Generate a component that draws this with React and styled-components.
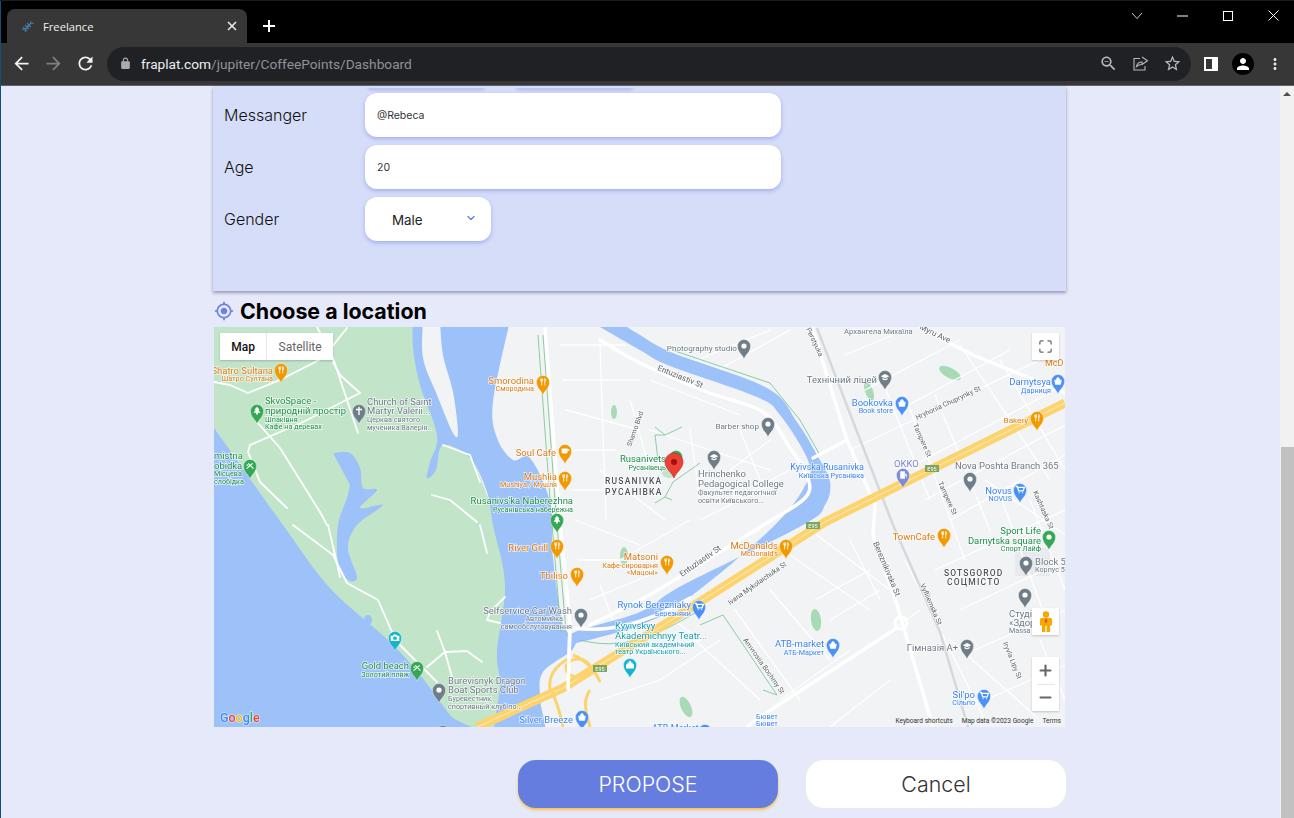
import React from "react";
import styled, { createGlobalStyle } from "styled-components";
import { ChevronDown, Maximize, Plus, Minus } from "lucide-react";

const GlobalStyle = createGlobalStyle`
  html, body {
    margin: 0;
    height: 100%;
    overflow: hidden;
    background: #e6e9fa;
    font-family: Inter, "Liberation Sans", sans-serif;
  }
`;

const Screen = styled.div`
  position: relative;
  display: flex;
  flex-direction: column;
  width: 1294px;
  height: 818px;
  overflow: hidden;
  &::before {
    content: "";
    position: absolute;
    top: 1px;
    bottom: 0;
    left: 0;
    width: 1px;
    background: #12507a;
  }
`;

/* browser chrome */
const TabStrip = styled.div`
  display: flex;
  align-items: flex-end;
  height: 43px;
  flex: none;
  padding-left: 7px;
  background: #000;
  border-top: 1px solid #1c1c1c;
  box-sizing: border-box;
`;

const Tab = styled.div`
  display: flex;
  align-items: center;
  width: 240px;
  height: 34px;
  padding: 0 10px 0 13px;
  box-sizing: border-box;
  border-radius: 8px 8px 0 0;
  background: #373737;
  color: #f1f1f1;
  font: 11.2px "Open Sans", "Liberation Sans", sans-serif;
`;

const TabTitle = styled.span`
  flex: 1;
  margin-left: 7px;
`;

const NewTab = styled.div`
  display: flex;
  align-items: center;
  justify-content: center;
  width: 44px;
  height: 34px;
`;

const WindowButtons = styled.div`
  display: flex;
  align-self: flex-start;
  margin-left: auto;
  margin-right: -2px;
`;

const WindowButton = styled.div`
  display: flex;
  align-items: center;
  justify-content: center;
  width: 45.5px;
  height: 29px;
`;

const Toolbar = styled.div`
  display: flex;
  align-items: center;
  height: 43px;
  flex: none;
  padding: 0 3px 1px 5px;
  box-sizing: border-box;
  background: #373737;
  border-bottom: 1px solid #5f6368;
`;

const NavIcon = styled.div`
  display: flex;
  align-items: center;
  justify-content: center;
  width: 32px;
  height: 32px;
`;

const Omnibox = styled.div`
  display: flex;
  align-items: center;
  flex: 1;
  height: 34px;
  margin: 0 4px 0 6px;
  padding: 0 3px 0 12px;
  border-radius: 17px;
  background: #202124;
`;

const Url = styled.div`
  flex: 1;
  margin-left: 9px;
  font: 13.7px Roboto, "Liberation Sans", sans-serif;
  color: #8f9399;
  & b {
    font-weight: 400;
    color: #eceff1;
  }
`;

const Avatar = styled.div`
  display: flex;
  align-items: center;
  justify-content: center;
  width: 22px;
  height: 22px;
  border-radius: 50%;
  background: #000;
`;

/* page */
const Viewport = styled.div`
  display: flex;
  flex: 1;
  min-height: 0;
`;

const Page = styled.main`
  flex: 1;
  min-width: 0;
  padding-right: 1px;
`;

const Column = styled.div`
  width: 853px;
  margin: 0 auto;
`;

const Panel = styled.section`
  display: flex;
  flex-direction: column;
  gap: 8px;
  padding-bottom: 50px;
  background: #d6ddf8;
  box-shadow: 0 2px 3px rgba(60, 64, 90, 0.45);
`;

const StubRow = styled.div`
  display: flex;
  gap: 31px;
  height: 2px;
  margin-bottom: -3px;
  padding-left: 155px;
`;

const Stub = styled.div`
  width: ${(p) => p.$w}px;
  height: 2px;
  background: #d6ddf8;
  border-radius: 0 0 10px 10px;
  box-shadow: 0 2px 3px #a3aef0;
`;

const Row = styled.div`
  display: flex;
  align-items: center;
  padding-left: 11px;
`;

const Label = styled.label`
  width: 141px;
  font-size: 16px;
  font-weight: 300;
  color: #111;
`;

const Input = styled.div`
  display: flex;
  align-items: center;
  width: 416px;
  height: 44px;
  padding-left: 12px;
  box-sizing: border-box;
  border-radius: 12px;
  background: #fff;
  box-shadow: 0 2px 4px #a3aef0;
  font: 10.5px Inter, sans-serif;
  color: #333;
`;

const Select = styled.div`
  display: flex;
  align-items: center;
  justify-content: space-between;
  width: 126px;
  height: 44px;
  padding: 2px 14px 0 27px;
  box-sizing: border-box;
  border-radius: 12px;
  background: #fff;
  box-shadow: 0 2px 4px #a3aef0;
  font-size: 13.4px;
  color: #222;
  & svg {
    margin-top: -5px;
  }
`;

const SectionTitle = styled.h2`
  display: flex;
  align-items: center;
  gap: 6px;
  height: 36px;
  margin: 0;
  padding: 4px 0 0 1px;
  box-sizing: border-box;
  font-size: 21.4px;
  font-weight: 700;
  color: #000;
`;

const MapFrame = styled.div`
  position: relative;
  width: 851px;
  height: 400px;
  margin-left: 1px;
  overflow: hidden;
  background: #f1f3f4;
`;

const MapSvg = styled.svg`
  display: block;
  filter: blur(0.3px);
`;

const MapTypes = styled.div`
  position: absolute;
  top: 6px;
  left: 6px;
  display: flex;
  height: 27px;
  background: #fff;
  box-shadow: 0 1px 2px rgba(0, 0, 0, 0.2);
  font: 12px Roboto, sans-serif;
`;

const MapType = styled.div`
  display: flex;
  align-items: center;
  padding: 0 11.3px;
  color: ${(p) => (p.$active ? "#111" : "#666")};
  font-weight: ${(p) => (p.$active ? 500 : 400)};
  & + & {
    border-left: 1px solid #e6e6e6;
  }
`;

const MapButton = styled.div`
  position: absolute;
  right: 6px;
  top: ${(p) => p.$top}px;
  display: flex;
  align-items: center;
  justify-content: center;
  width: 27px;
  height: 27px;
  background: #fff;
  box-shadow: 0 1px 2px rgba(0, 0, 0, 0.2);
  color: #666;
`;

const ZoomBox = styled.div`
  position: absolute;
  right: 6px;
  top: 330px;
  display: flex;
  flex-direction: column;
  align-items: center;
  justify-content: center;
  gap: 4.5px;
  width: 27px;
  height: 54px;
  background: #fff;
  box-shadow: 0 1px 2px rgba(0, 0, 0, 0.2);
  color: #666;
`;

const ZoomRule = styled.div`
  width: 18px;
  height: 1px;
  background: #e6e6e6;
`;

const Attribution = styled.div`
  position: absolute;
  right: 4px;
  bottom: 2px;
  display: flex;
  gap: 9px;
  font: 6.6px Roboto, sans-serif;
  color: #333;
  background: rgba(241, 243, 244, 0.7);
`;

const Actions = styled.div`
  display: flex;
  justify-content: flex-end;
  gap: 28px;
  margin-top: 33px;
`;

const Button = styled.button`
  width: 260px;
  height: 48px;
  border: 0;
  border-radius: 18px;
  font: 300 21.4px Inter, sans-serif;
  background: ${(p) => (p.$primary ? "#667de0" : "#fff")};
  color: ${(p) => (p.$primary ? "#fff" : "#333")};
  box-shadow: ${(p) => (p.$primary ? "0 2px 3px #fbbf4f" : "none")};
`;

const Scrollbar = styled.div`
  display: flex;
  flex-direction: column;
  align-items: center;
  width: 14px;
  background: #f1f1f1;
`;

const ScrollArrow = styled.div`
  width: 0;
  height: 0;
  margin-top: 6px;
  border: 4px solid transparent;
  border-top: 0;
  border-bottom: 4px solid #505050;
`;

const ScrollThumb = styled.div`
  align-self: flex-end;
  width: 13px;
  margin-top: auto;
  height: 371px;
  background: #c1c1c1;
`;

const Mat = ({ d, size = 20, color = "#fff" }) => (
  <svg width={size} height={size} viewBox="0 0 24 24" fill={color}>
    <path d={d} />
  </svg>
);

const ICONS = {
  back: "M20 11H7.83l5.59-5.59L12 4l-8 8 8 8 1.41-1.41L7.83 13H20v-2z",
  forward: "M4 11h12.17l-5.59-5.59L12 4l8 8-8 8-1.41-1.41L16.17 13H4v-2z",
  reload:
    "M17.65 6.35C16.2 4.9 14.21 4 12 4c-4.42 0-7.99 3.58-7.99 8s3.57 8 7.99 8c3.73 0 6.84-2.55 7.73-6h-2.08c-.82 2.33-3.04 4-5.65 4-3.31 0-6-2.69-6-6s2.69-6 6-6c1.66 0 3.14.69 4.22 1.78L13 11h7V4l-2.35 2.35z",
  lock: "M18 8h-1V6c0-2.76-2.24-5-5-5S7 3.24 7 6v2H6c-1.1 0-2 .9-2 2v10c0 1.1.9 2 2 2h12c1.1 0 2-.9 2-2V10c0-1.1-.9-2-2-2zM9 6c0-1.66 1.34-3 3-3s3 1.34 3 3v2H9V6z",
  star: "M22 9.24l-7.19-.62L12 2 9.19 8.63 2 9.24l5.46 4.73L5.82 21 12 17.27 18.18 21l-1.63-7.03L22 9.24zM12 15.4l-3.76 2.27 1-4.28-3.32-2.88 4.38-.38L12 6.1l1.71 4.04 4.38.38-3.32 2.88 1 4.28L12 15.4z",
  zoomOut:
    "M15.5 14h-.79l-.28-.27C15.41 12.59 16 11.11 16 9.5 16 5.91 13.09 3 9.5 3S3 5.91 3 9.5 5.91 16 9.5 16c1.61 0 3.09-.59 4.23-1.57l.27.28v.79l5 4.99L20.49 19l-4.99-5zm-6 0C7.01 14 5 11.99 5 9.5S7.01 5 9.5 5 14 7.01 14 9.5 11.99 14 9.5 14zM7 9h5v1H7z",
  person:
    "M12 12c2.21 0 4-1.79 4-4s-1.79-4-4-4-4 1.79-4 4 1.79 4 4 4zm0 2c-2.67 0-8 1.34-8 4v2h16v-2c0-2.66-5.33-4-8-4z",
  kebab:
    "M12 8c1.1 0 2-.9 2-2s-.9-2-2-2-2 .9-2 2 .9 2 2 2zm0 2c-1.1 0-2 .9-2 2s.9 2 2 2 2-.9 2-2-.9-2-2-2zm0 6c-1.1 0-2 .9-2 2s.9 2 2 2 2-.9 2-2-.9-2-2-2z",
  target:
    "M12 8c-2.21 0-4 1.79-4 4s1.79 4 4 4 4-1.79 4-4-1.79-4-4-4zm8.94 3c-.46-4.17-3.77-7.48-7.94-7.94V1h-2v2.06C6.83 3.52 3.52 6.83 3.06 11H1v2h2.06c.46 4.17 3.77 7.48 7.94 7.94V23h2v-2.06c4.17-.46 7.48-3.77 7.94-7.94H23v-2h-2.06zM12 19c-3.87 0-7-3.13-7-7s3.13-7 7-7 7 3.13 7 7-3.13 7-7 7z",
};

const Favicon = () => (
  <svg width="16" height="16" viewBox="0 0 16 16" fill="none" stroke="#3f7cac" strokeWidth="1.1">
    <path d="M2 11c4 1 8-2 9-8M5 14c1-6 5-9 9-9M5 7l4 4M7 5l4 4M3 9l4 4" />
  </svg>
);

// catmull-rom through the points, so shores and the canal don't look cut with a ruler
const smooth = (pts, close = false) => {
  let d = `M${pts[0][0]} ${pts[0][1]}`;
  for (let i = 0; i < pts.length - 1; i++) {
    const p0 = pts[i - 1] || pts[i];
    const p1 = pts[i];
    const p2 = pts[i + 1];
    const p3 = pts[i + 2] || p2;
    const c1x = p1[0] + (p2[0] - p0[0]) / 6;
    const c1y = p1[1] + (p2[1] - p0[1]) / 6;
    const c2x = p2[0] - (p3[0] - p1[0]) / 6;
    const c2y = p2[1] - (p3[1] - p1[1]) / 6;
    d += `C${c1x.toFixed(1)} ${c1y.toFixed(1)} ${c2x.toFixed(1)} ${c2y.toFixed(1)} ${p2[0]} ${p2[1]}`;
  }
  return close ? d + "Z" : d;
};

/* map data, in the coordinates of the screenshot */
const PARK = "M214 320H440L470 450 500 530 508 585 505 740H214Z";
const WEST_WATER = smooth(
  [[200, 410], [214, 428], [283, 525], [330, 588], [388, 640], [420, 675], [450, 715], [470, 740], [200, 740]],
  true
);
const EAST_WATER = smooth(
  [
    [413, 320], [413, 348], [420, 385], [437, 435], [430, 462], [427, 478], [436, 470], [443, 445], [470, 458],
    [487, 492], [493, 525], [505, 585], [497, 652], [500, 685], [497, 740], [543, 740], [540, 698], [543, 672],
    [572, 650], [575, 635], [563, 625], [553, 558], [550, 502], [530, 458], [513, 460], [497, 438], [493, 402],
    [510, 320],
  ],
  true
);
const ISLAND = smooth(
  [[423, 320], [423, 358], [437, 395], [453, 433], [458, 432], [453, 392], [443, 355], [440, 320]],
  true
);
const LAKE = smooth(
  [
    [333, 453], [350, 453], [360, 468], [363, 488], [377, 490], [360, 508], [383, 505], [357, 525], [348, 548],
    [357, 577], [348, 580], [338, 562], [338, 525], [347, 498], [350, 485],
  ],
  true
);
const CANAL = smooth(
  [
    [627, 327], [640, 335], [673, 353], [767, 388], [797, 422], [817, 455], [830, 482], [825, 505], [803, 525],
    [683, 585], [640, 612], [575, 632], [565, 645], [640, 625], [690, 597], [773, 527], [807, 482], [807, 458],
    [780, 415], [757, 397], [670, 366], [640, 350], [600, 327],
  ],
  true
);
const ENTUZIASTIV = smooth([
  [600, 340], [640, 363], [707, 392], [763, 412], [790, 448], [807, 475], [805, 498], [760, 527], [683, 575],
  [640, 600], [590, 625],
]);

const MAJOR_ROADS = [
  "M545 327L560 522 570 625 568 690",
  "M812 327L847 440 875 505 873 535 897 605 933 727",
  "M897 628L763 715 747 727",
  "M920 328L973 355 1040 382 1065 393",
  "M813 458L847 440",
  "M575 628C600 632 640 628 690 598",
];

const MINOR_ROADS = [
  "M560 345H625M563 380H640M566 410L640 430M570 450H615M572 490H630M575 520L640 545M578 560H660M600 345L606 520",
  "M630 400L650 470M600 470L665 520M620 560L690 520M650 380L740 415M690 430L700 500M740 430L760 480M650 430L770 470",
  "M685 365L770 330M700 380L790 330M730 470L770 440M735 500L790 470M700 520L780 480",
  "M845 355L905 330M865 390L960 340M890 415L1010 350M905 470L1055 390M925 500L1065 425M850 450L1040 360",
  "M880 375L930 500M905 395L965 560M935 395L990 530M960 345L1050 480M1000 360L1065 470",
  "M985 480L1065 535M950 520L1065 455M935 570L1065 510M960 610L1065 560M975 650L1065 610",
  "M1000 495L1050 630M1030 500L1065 590M905 560L985 720M950 640L1040 720M985 700L1065 665M1040 640L1065 700",
  "M790 555L870 610M810 530L890 590M770 590L830 660M735 610L800 700M695 640L760 700M640 650L700 640M660 680L720 640M600 700L660 680",
  "M850 540L880 600M815 600L870 570M830 620L880 590M850 660L920 610M780 700L850 650M830 727L890 680",
  "M590 600L650 575M600 585L620 640M660 610L700 640M700 560L760 530",
];

const PARK_PATHS = [
  "M214 382L230 385 248 393 280 380 323 358 347 328",
  "M317 327L333 358 358 433",
  "M333 362L340 375 360 393 303 422 250 445 248 452 260 482 287 508",
  "M257 422L280 448 320 512 327 525",
  "M293 525L333 555 347 583 378 600 392 632 400 645 437 682",
  "M328 525L338 568 340 577",
  "M437 631L445 652 452 677",
  "M427 667L445 652 467 651 482 662",
  "M505 597L490 612 487 620 500 623",
  "M480 525L487 553",
  "M432 495L450 500 477 522",
  "M443 445L470 455 480 482",
];

const GREEN_PATHS = [
  "M538 335L550 500 561 632",
  "M543 335L555 500 566 632",
  "M655 427L665 435 682 427M665 435L655 435 658 460",
  "M700 463L673 482 665 497 655 503M665 497L672 500",
  "M672 350L770 383 800 420 820 455",
  "M700 625L723 615 777 695 763 690",
  "M580 640C620 650 650 640 700 610",
];

// text, x, y, colour, size, anchor
const LABELS = [
  ["Shatro Sultana", 273, 374, "o", 10.5, "end"],
  ["Шатро Султана", 273, 381, "o", 8, "end"],
  ["SkvoSpace -", 265, 404, "g", 10.5],
  ["природній простір", 265, 414, "g", 10.5],
  ["Шпаківня -", 265, 422, "g", 8],
  ["Кафе на деревах", 265, 429, "g", 8],
  ["Church of Saint", 367, 405, "s", 10.5],
  ["Martyr Valerii...", 367, 414, "s", 10.5],
  ["Церква святого", 367, 422, "s", 8],
  ["мученика Валерія...", 367, 430, "s", 8],
  ["mistna", 214, 459, "g", 10.5],
  ["obidka", 214, 469, "g", 10.5],
  ["Місцева", 214, 476, "g", 8],
  ["слобідка", 214, 484, "g", 8],
  ["Smorodina", 534, 384, "o", 10.5, "end"],
  ["Смородина", 534, 391, "o", 8, "end"],
  ["Soul Cafe", 556, 456, "o", 10.5, "end"],
  ["Mushlia", 557, 480, "o", 10.5, "end"],
  ["Mushlya / Мушля", 557, 487, "o", 8, "end"],
  ["Rusanivs'ka Naberezhna", 573, 504, "g", 10.5, "end"],
  ["Русанівська набережна", 573, 512, "g", 8, "end"],
  ["River Grill", 548, 551, "o", 10.5, "end"],
  ["Tbiliso", 568, 579, "o", 10.5, "end"],
  ["Selfservice Car Wash", 572, 614, "s", 10.5, "end"],
  ["Автомийка", 563, 621, "s", 8, "end"],
  ["самообслуговування", 572, 629, "s", 8, "end"],
  ["Gold beach", 409, 669, "g", 10.5, "end"],
  ["Золотий пляж", 409, 677, "g", 8, "end"],
  ["Burevisnyk Dragon", 448, 684, "s", 10.5],
  ["Boat Sports Club", 448, 693, "s", 10.5],
  ["Буревестник,", 448, 701, "s", 8],
  ["спортивный клуб по...", 448, 709, "s", 8],
  ["Silver Breeze", 573, 723, "b", 10.5, "end"],
  ["Rusanivets", 666, 462, "g", 10.5, "end"],
  ["Русанівець", 666, 470, "g", 8, "end"],
  ["Photography studio", 737, 351, "s", 9, "end"],
  ["Barber shop", 759, 429, "s", 9, "end"],
  ["Hrinchenko", 698, 477, "s", 10.5],
  ["Pedagogical College", 698, 487, "s", 10.5],
  ["Факультет педагогічної", 698, 495, "s", 8],
  ["освіти Київського...", 698, 503, "s", 8],
  ["Kyivska Rusanivka", 864, 470, "b", 10, "end"],
  ["Київська Русанівка", 864, 478, "b", 8, "end"],
  ["Технічний ліцей", 877, 383, "s", 10.5, "end"],
  ["Bookovka", 893, 406, "b", 10.5, "end"],
  ["Book store", 893, 413, "b", 8, "end"],
  ["Архангела Михаїла", 844, 334, "s", 8.5],
  ["Darnytsya", 1051, 385, "b", 10.5, "end"],
  ["Дарниця", 1051, 393, "b", 8, "end"],
  ["Bakery", 1028, 423, "o", 9, "end"],
  ["OKKO", 894, 467, "p", 10.5],
  ["Nova Poshta Branch 365", 955, 469, "s", 10.5],
  ["Novus", 1012, 494, "b", 10.5, "end"],
  ["NOVUS", 1012, 501, "b", 8, "end"],
  ["TownCafe", 935, 540, "o", 10.5, "end"],
  ["Sport Life", 1041, 534, "g", 10.5, "end"],
  ["Darnytska square", 1041, 544, "g", 10.5, "end"],
  ["Спорт Лайф", 1041, 551, "g", 8, "end"],
  ["Block 5", 1035, 565, "s", 10.5],
  ["Корпус 5", 1035, 572, "s", 8],
  ["Студі", 1009, 617, "s", 10.5],
  ["«Здор", 1009, 626, "s", 10.5],
  ["Massa", 1009, 633, "s", 8],
  ["Гімназія A+", 958, 651, "s", 10.5, "end"],
  ["Sil'po", 975, 698, "b", 10.5, "end"],
  ["Сільпо", 975, 705, "b", 8, "end"],
  ["ATB-market", 824, 647, "b", 10.5, "end"],
  ["АТБ-Маркет", 824, 655, "b", 8, "end"],
  ["Rynok Berezniaky", 691, 608, "b", 10.5, "end"],
  ["Березняки", 691, 616, "b", 8, "end"],
  ["Kyyivskyy", 615, 629, "t", 10.5],
  ["Akademichnyy Teatr...", 615, 639, "t", 10.5],
  ["Київський академічний", 615, 647, "t", 8],
  ["театр Українського...", 615, 654, "t", 8],
  ["Matsoni", 658, 560, "o", 10.5, "end"],
  ["Кафе-сироварня", 658, 568, "o", 8, "end"],
  ["«Мацоні»", 658, 575, "o", 8, "end"],
  ["McDonalds", 778, 549, "o", 10.5, "end"],
  ["McDonald's", 778, 556, "o", 8, "end"],
  ["McD", 1045, 366, "o", 10],
  ["Бювет", 756, 719, "b", 8],
  ["Бювет", 756, 726, "b", 8],
  ["ATB-Market", 652, 731, "b", 10],
];

const STREETS = [
  ["RUSANIVKA", 605, 484, 8.5, 1.2],
  ["РУСАНІВКА", 605, 495, 8.5, 1.2],
  ["SOTSGOROD", 944, 576, 8.5, 1.1],
  ["СОЦМІСТО", 947, 585, 8.5, 1.2],
];

const ROAD_NAMES = [
  ["Entuziastiv St", 657, 370, 22, 8],
  ["Entuziastiv St", 682, 577, -35, 8],
  ["Shamo Blvd", 631, 447, -70, 7],
  ["Myru Ave", 919, 329, 25, 8],
  ["Hryhoriia Chuprynky St", 917, 420, -25, 7],
  ["Tampere St", 913, 425, 66, 7],
  ["Tampere St", 938, 483, 65, 7],
  ["Kashtaska St", 1033, 492, 66, 7],
  ["Bereznikivska St", 873, 543, 67, 8],
  ["Vyfliiemska St", 920, 585, 66, 7],
  ["Ivana Mykolaichuka St", 730, 605, -35, 7],
  ["Amvrosiia Bochmy St", 743, 640, 55, 7],
  ["Iryvla Lipy St", 1003, 643, 68, 7],
  ["Perstyuka", 806, 329, 65, 7],
];

const COLORS = {
  o: "#e07b12",
  g: "#1e8e4a",
  s: "#6e7a85",
  b: "#3b82f1",
  t: "#129eaf",
  p: "#7a85cc",
};

const PINS = [
  [281, 370, "o", "fork"],
  [543, 382, "o", "fork"],
  [565, 451, "o", "cup"],
  [565, 478, "o", "fork"],
  [1037, 418, "o", "fork"],
  [557, 546, "o", "fork"],
  [577, 574, "o", "fork"],
  [667, 562, "o", "fork"],
  [786, 546, "o", "fork"],
  [944, 535, "o", "fork"],
  [257, 411, "g", "tree"],
  [557, 520, "g", "tree"],
  [250, 466, "g", "ball"],
  [417, 668, "g", "ball"],
  [1049, 537, "g", "dot"],
  [676, 457, "g", "dot"],
  [359, 411, "s", "cross"],
  [744, 346, "s", "dot"],
  [768, 424, "s", "dot"],
  [714, 457, "s", "cap"],
  [885, 377, "s", "cap"],
  [970, 479, "s", "dot"],
  [1026, 563, "s", "dot"],
  [1025, 595, "s", "dot"],
  [967, 646, "s", "cap"],
  [581, 615, "s", "dot"],
  [439, 690, "s", "dot"],
  [443, 732, "s", "dot"],
  [1058, 381, "b", "bag"],
  [902, 403, "b", "bag"],
  [1020, 490, "b", "cart"],
  [699, 607, "b", "cart"],
  [833, 645, "b", "bag"],
  [984, 696, "b", "cart"],
  [582, 717, "b", "bag"],
  [705, 731, "b", "bag"],
  [395, 638, "t", "camera"],
  [630, 665, "t", "bank"],
  [903, 475, "p", "fuel"],
];

const PIN_COLORS = {
  o: "#f29900",
  g: "#34a853",
  s: "#6f7d88",
  b: "#4a90f5",
  t: "#12b5cb",
  p: "#7b8bd6",
};

const SHIELDS = [
  [593, 665],
  [925, 465],
  [806, 522],
];

const Glyph = ({ type }) => {
  switch (type) {
    case "fork":
      return <path d="M-2.5-4V-1M-1.5-4V4M-.5-4V-1M-2.5-1H-.5M2-4V4M2-4C3.4-3 3.4-.5 2-.3" stroke="#fff" strokeWidth="1" fill="none" />;
    case "cup":
      return <path d="M-4-3H3V1C3 2.5 2 3 1 3H-2C-3 3-4 2.5-4 1ZM3-2H5V0H3" fill="#fff" />;
    case "tree":
      return <path d="M0-5L3-1.5H1.5L4 2H1V4H-1V2H-4L-1.5-1.5H-3Z" fill="#fff" />;
    case "ball":
      return <path d="M-4 3L3-3M-2-3L4 3M-4-1H-2" stroke="#fff" strokeWidth="1.4" fill="none" />;
    case "cross":
      return <path d="M-.8-5H.8V-2.5H3.5V-1H.8V4.5H-.8V-1H-3.5V-2.5H-.8Z" fill="#fff" />;
    case "cap":
      return <path d="M-5-1L0-3.5 5-1 0 1.5ZM-3 1V2.5C-1 4 1 4 3 2.5V1L0 2.5Z" fill="#fff" />;
    case "bag":
      return <path d="M-4-1H4L3 4H-3ZM-2-1C-2-5 2-5 2-1" fill="#fff" stroke="#fff" strokeWidth=".6" />;
    case "cart":
      return <path d="M-5-4H-3L-1.5 1H3.5L5-3H-2.5M-1.5 3H-.5M2.5 3H3.5" stroke="#fff" strokeWidth="1.5" fill="none" />;
    case "camera":
      return <path d="M-5-2.5H-2.5L-1.5-4H1.5L2.5-2.5H5V3.5H-5ZM0-1.5A1.8 1.8 0 1 0 0 2 1.8 1.8 0 1 0 0-1.5Z" fill="#fff" fillRule="evenodd" />;
    case "bank":
      return <path d="M-1-5H1V-3H3V-1H4.5V4H-4.5V-1H-3V-3H-1Z" fill="#fff" />;
    case "fuel":
      return <path d="M-3-4H2V4H-3ZM2-1H4V3" fill="#fff" stroke="#fff" strokeWidth=".5" />;
    default:
      return <circle r="3" fill="#fff" />;
  }
};

const Pin = ({ x, y, color, type }) => (
  <g transform={`translate(${x} ${y}) scale(.87)`}>
    <path
      d="M0 15C-1.5 10-7.5 7-7.5 0A7.5 7.5 0 0 1 7.5 0C7.5 7 1.5 10 0 15Z"
      fill={PIN_COLORS[color]}
      stroke="#fff"
      strokeOpacity=".7"
      strokeWidth=".6"
    />
    <Glyph type={type} />
  </g>
);

const MapDrawing = () => (
  <MapSvg width="851" height="400" viewBox="214 327 851 400">
    <rect x="214" y="327" width="851" height="400" fill="#f1f3f4" />
    <path d={PARK} fill="#c2e5ca" />
    <path d={EAST_WATER} fill="#9dc1f9" />
    <path d={ISLAND} fill="#f1f3f4" />
    <path d={LAKE} fill="#9dc1f9" />
    <ellipse cx="368" cy="620" rx="4" ry="5" fill="#9dc1f9" />
    <path d={WEST_WATER} fill="#9dc1f9" />

    <ellipse cx="950" cy="373" rx="12" ry="5" transform="rotate(28 950 373)" fill="#a8dab5" />
    <ellipse cx="869" cy="391" rx="4" ry="10" transform="rotate(-20 869 391)" fill="#a8dab5" />
    <ellipse cx="816" cy="620" rx="5" ry="11" transform="rotate(-8 816 620)" fill="#a8dab5" />
    <ellipse cx="686" cy="707" rx="5" ry="11" transform="rotate(-25 686 707)" fill="#a8dab5" />
    <ellipse cx="614" cy="412" rx="3" ry="7" fill="#a8dab5" />
    <ellipse cx="624" cy="556" rx="4" ry="9" fill="#a8dab5" />
    <ellipse cx="669" cy="473" rx="7" ry="5" fill="#c2e5ca" />
    <rect x="1015" y="548" width="35" height="28" fill="#e8eaed" />

    <g fill="none" stroke="#fff" strokeLinecap="round" strokeLinejoin="round">
      {MINOR_ROADS.map((d) => (
        <path key={d} d={d} strokeWidth="1.3" />
      ))}
      {PARK_PATHS.map((d) => (
        <path key={d} d={d} strokeWidth="1.8" />
      ))}
    </g>

    <path d={CANAL} fill="#9dc1f9" />

    <g fill="none" stroke="#7fc89a" strokeWidth=".9">
      {GREEN_PATHS.map((d) => (
        <path key={d} d={d} />
      ))}
    </g>

    <path d="M817 328L893 525 940 632 968 727" fill="none" stroke="#d5d8dc" strokeWidth="2.5" />
    <g fill="none" stroke="#fff" strokeLinecap="round" strokeLinejoin="round">
      <path d={ENTUZIASTIV} strokeWidth="3.5" />
      {MAJOR_ROADS.map((d) => (
        <path key={d} d={d} strokeWidth="3.5" />
      ))}
    </g>

    <g fill="none" stroke="#fdd36d" strokeLinejoin="round">
      <path d="M1065 403L825 522 640 640 563 688 477 727" strokeWidth="9" />
      <path d="M1065 403L825 522 640 640 563 688 477 727" stroke="#fff3cf" strokeWidth=".8" />
      <ellipse cx="578" cy="668" rx="12" ry="9" strokeWidth="3" />
      <path
        d="M550 690C548 675 556 665 570 658M573 655C585 660 595 670 600 682M563 727C560 710 555 700 552 690M590 727C585 710 583 700 590 690"
        strokeWidth="3"
      />
    </g>
    <path d="M570 625L568 690" stroke="#fff" strokeWidth="3.5" />
    <circle cx="901" cy="623" r="6" fill="none" stroke="#fff" strokeWidth="3" />

    {SHIELDS.map(([x, y]) => (
      <g key={x}>
        <rect x={x} y={y} width="14" height="7" fill="#7aa660" />
        <text x={x + 7} y={y + 5.5} fontFamily="Roboto, sans-serif" fontSize="5.5" textAnchor="middle" fill="#fff">
          E95
        </text>
      </g>
    ))}

    <g fontFamily="Roboto, sans-serif" paintOrder="stroke" stroke="#fff" strokeOpacity=".75" strokeWidth="1.5">
      {ROAD_NAMES.map(([text, x, y, angle, size]) => (
        <text key={text + x} x={x} y={y} transform={`rotate(${angle} ${x} ${y})`} fontSize={size} fill="#5f6368">
          {text}
        </text>
      ))}
      {STREETS.map(([text, x, y, size, spacing]) => (
        <text key={text} x={x} y={y} fontSize={size} letterSpacing={spacing} fontWeight="500" fill="#4f5459">
          {text}
        </text>
      ))}
      {LABELS.map(([text, x, y, color, size, anchor]) => (
        <text key={text + x + y} x={x} y={y} fontSize={size * 0.9} textAnchor={anchor || "start"} fill={COLORS[color]}>
          {text}
        </text>
      ))}
    </g>

    {PINS.map(([x, y, color, type]) => (
      <Pin key={`${x}-${y}`} x={x} y={y} color={color} type={type} />
    ))}

    <g transform="translate(674 463)">
      <path d="M0 15C-2 9-9 6-9 -1A9 9 0 0 1 9 -1C9 6 2 9 0 15Z" fill="#ea4335" stroke="#c5221f" strokeWidth=".6" />
      <circle cy="-1" r="3" fill="#a50e0e" />
    </g>

    <text x="220" y="722" fontFamily="Roboto, sans-serif" fontSize="12.5" fontWeight="500" paintOrder="stroke" stroke="#fff" strokeOpacity=".7" strokeWidth="1.2">
      <tspan fill="#4285f4">G</tspan>
      <tspan fill="#ea4335">o</tspan>
      <tspan fill="#fbbc05">o</tspan>
      <tspan fill="#4285f4">g</tspan>
      <tspan fill="#34a853">l</tspan>
      <tspan fill="#ea4335">e</tspan>
    </text>
  </MapSvg>
);

const Pegman = () => (
  <svg width="16" height="22" viewBox="0 0 16 22">
    <circle cx="8" cy="3.5" r="3.2" fill="#f5a800" />
    <path d="M2 8.5C2 7 4.5 6.8 8 6.8S14 7 14 8.5V14.5H12V21H8.6V15H7.4V21H4V14.5H2Z" fill="#f5a800" />
    <path d="M8 7.5L6.5 9.5 8 13 9.5 9.5Z" fill="#d9534f" />
  </svg>
);

export default function App() {
  return (
    <>
      <GlobalStyle />
      <Screen>
        <TabStrip>
          <Tab>
            <Favicon />
            <TabTitle>Freelance</TabTitle>
            <svg width="10" height="10" viewBox="0 0 10 10" stroke="#eee" strokeWidth="1.5">
              <path d="M1 1L9 9M9 1L1 9" />
            </svg>
          </Tab>
          <NewTab>
            <svg width="14" height="14" viewBox="0 0 14 14" stroke="#fff" strokeWidth="2">
              <path d="M7 1V13M1 7H13" />
            </svg>
          </NewTab>
          <WindowButtons>
            <WindowButton>
              <svg width="12" height="8" viewBox="0 0 12 8" fill="none" stroke="#ccc">
                <path d="M1 1L6 6.5 11 1" />
              </svg>
            </WindowButton>
            <WindowButton>
              <svg width="11" height="2" viewBox="0 0 11 2" stroke="#fff">
                <path d="M0 1H11" />
              </svg>
            </WindowButton>
            <WindowButton>
              <svg width="10" height="10" viewBox="0 0 10 10" fill="none" stroke="#fff">
                <rect x=".5" y=".5" width="9" height="9" />
              </svg>
            </WindowButton>
            <WindowButton>
              <svg width="11" height="11" viewBox="0 0 11 11" stroke="#fff">
                <path d="M.5 .5L10.5 10.5M10.5 .5L.5 10.5" />
              </svg>
            </WindowButton>
          </WindowButtons>
        </TabStrip>
        <Toolbar>
          <NavIcon>
            <Mat d={ICONS.back} size={21} color="#f1f3f4" />
          </NavIcon>
          <NavIcon>
            <Mat d={ICONS.forward} size={21} color="#7d8084" />
          </NavIcon>
          <NavIcon>
            <Mat d={ICONS.reload} size={21} color="#f1f3f4" />
          </NavIcon>
          <Omnibox>
            <Mat d={ICONS.lock} size={13} color="#a8abaf" />
            <Url>
              <b>fraplat.com</b>/jupiter/CoffeePoints/Dashboard
            </Url>
            <NavIcon>
              <Mat d={ICONS.zoomOut} size={19} color="#b4b7bb" />
            </NavIcon>
            <NavIcon>
              <svg width="17" height="17" viewBox="0 0 17 17" fill="none" stroke="#b4b7bb" strokeWidth="1.1">
                <path d="M8 3.5H2V15H13V11M10 9.5V7C7 7 5 8.5 4.5 11.5 6 10 8 9.5 10 9.5ZM10 2L15.5 5.7 10 9.5" />
              </svg>
            </NavIcon>
            <NavIcon>
              <Mat d={ICONS.star} size={19} color="#b4b7bb" />
            </NavIcon>
          </Omnibox>
          <NavIcon>
            <svg width="14" height="14" viewBox="0 0 14 14" fill="#fff">
              <path d="M0 0H14V14H0ZM2 2V12H8V2Z" fillRule="evenodd" />
            </svg>
          </NavIcon>
          <NavIcon>
            <Avatar>
              <Mat d={ICONS.person} size={18} />
            </Avatar>
          </NavIcon>
          <NavIcon>
            <Mat d={ICONS.kebab} size={18} color="#e8eaed" />
          </NavIcon>
        </Toolbar>
        <Viewport>
          <Page>
            <Column>
              <Panel>
                <StubRow>
                  <Stub $w={117} />
                  <Stub $w={117} />
                </StubRow>
                <Row>
                  <Label>Messanger</Label>
                  <Input>@Rebeca</Input>
                </Row>
                <Row>
                  <Label>Age</Label>
                  <Input>20</Input>
                </Row>
                <Row>
                  <Label>Gender</Label>
                  <Select>
                    Male
                    <ChevronDown size={12} color="#667de0" strokeWidth={2.5} />
                  </Select>
                </Row>
              </Panel>
              <SectionTitle>
                <Mat d={ICONS.target} size={20} color="#6d80e4" />
                Choose a location
              </SectionTitle>
              <MapFrame>
                <MapDrawing />
                <MapTypes>
                  <MapType $active>Map</MapType>
                  <MapType>Satellite</MapType>
                </MapTypes>
                <MapButton $top={6}>
                  <Maximize size={15} strokeWidth={2} />
                </MapButton>
                <MapButton $top={281}>
                  <Pegman />
                </MapButton>
                <ZoomBox>
                  <Plus size={17} strokeWidth={3} />
                  <ZoomRule />
                  <Minus size={17} strokeWidth={3} />
                </ZoomBox>
                <Attribution>
                  <span>Keyboard shortcuts</span>
                  <span>Map data ©2023 Google</span>
                  <span>Terms</span>
                </Attribution>
              </MapFrame>
              <Actions>
                <Button $primary>PROPOSE</Button>
                <Button>Cancel</Button>
              </Actions>
            </Column>
          </Page>
          <Scrollbar>
            <ScrollArrow />
            <ScrollThumb />
          </Scrollbar>
        </Viewport>
      </Screen>
    </>
  );
}
